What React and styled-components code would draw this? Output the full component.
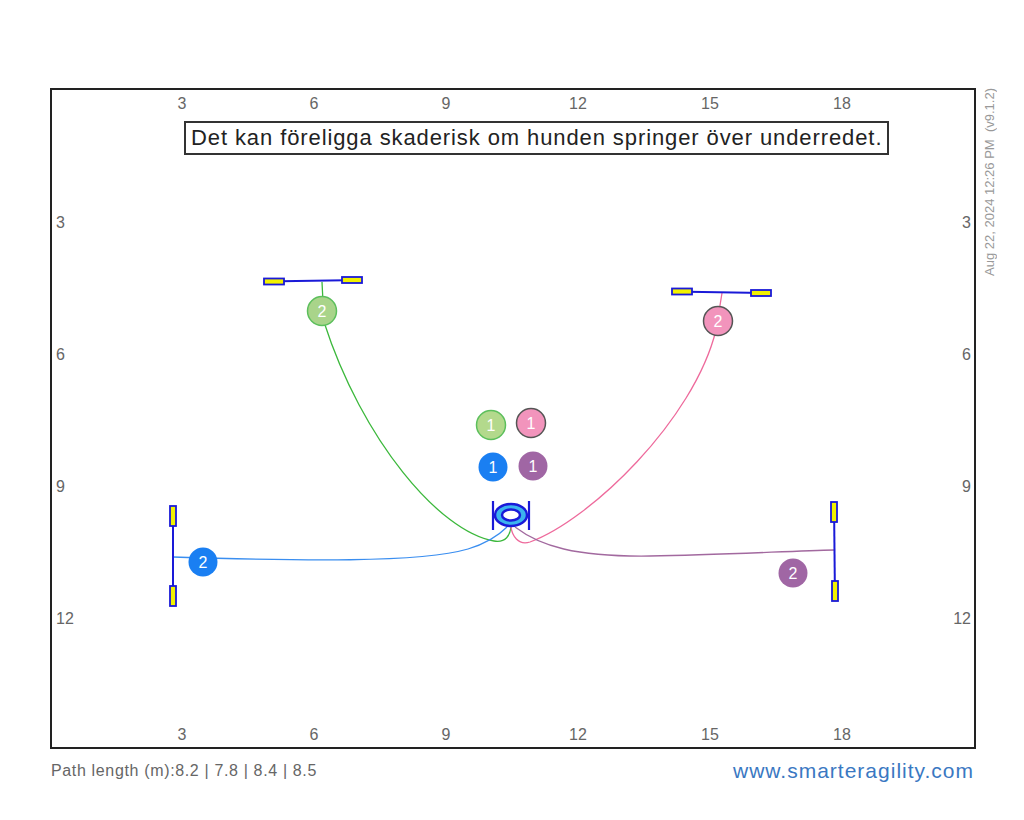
import React from "react";
import styled, { createGlobalStyle } from "styled-components";

const GlobalStyle = createGlobalStyle`
  body {
    margin: 0;
    background: #fff;
    font-family: "Liberation Sans", Arial, sans-serif;
  }
`;

const PX = 44; // pixels per metre
const X0 = 50;
const Y0 = 90;
const mx = (m) => X0 + m * PX;
const my = (m) => Y0 + m * PX;

const xTicks = [3, 6, 9, 12, 15, 18];
const yTicks = [3, 6, 9, 12];

const paths = [
  { color: "#3cb83c", d: "M322,282 L324,322 C 362,440 440,532 494,541 C 506,543 510,535 511,527" },
  { color: "#ee6a9c", d: "M722,293 L716,330 C 694,420 590,520 530,542 C 518,546 512,535 511,527" },
  { color: "#3a8ef0", d: "M173,557 C 300,561 420,563 468,549 C 488,543 500,534 507,527" },
  { color: "#a2699f", d: "M515,527 C 540,546 575,557 650,556 C 720,555 790,551 834,550" },
];

const markers = [
  { n: 2, x: 322, y: 311, fill: "#a9d48a", stroke: "#5cbf5c" },
  { n: 2, x: 718, y: 321, fill: "#f294bc", stroke: "#555" },
  { n: 2, x: 203, y: 562, fill: "#1a7ff2" },
  { n: 2, x: 793, y: 573, fill: "#a066a4" },
  { n: 1, x: 491, y: 425, fill: "#b3d98c", stroke: "#5cbf5c" },
  { n: 1, x: 531, y: 423, fill: "#f294bc", stroke: "#555" },
  { n: 1, x: 493, y: 467, fill: "#1a7ff2" },
  { n: 1, x: 533, y: 466, fill: "#a066a4" },
];

const Page = styled.div`
  padding: 88px 0 0 50px;
  width: 926px;
`;

const Field = styled.div`
  position: relative;
  width: 926px;
  height: 661px;
  box-sizing: border-box;
  border: 2px solid #222;
`;

const Canvas = styled.svg`
  position: absolute;
  inset: 0;
  width: 100%;
  height: 100%;
  overflow: visible;
`;

const Notice = styled.div`
  position: absolute;
  left: 132px;
  top: 31px;
  height: 34px;
  box-sizing: border-box;
  padding: 0 5px;
  border: 2px solid #333;
  background: #fff;
  color: #222;
  font-size: 22px;
  letter-spacing: 0.9px;
  line-height: 30px;
  white-space: nowrap;
`;

const Stamp = styled.div`
  position: absolute;
  top: -2px;
  left: 931px;
  writing-mode: vertical-rl;
  transform: rotate(180deg);
  color: #999;
  font-size: 13px;
  line-height: 14px;
  white-space: pre;
`;

const Footer = styled.div`
  display: flex;
  justify-content: space-between;
  align-items: center;
  padding: 10px 2px 0 1px;
`;

const PathLength = styled.span`
  color: #666;
  font-size: 16px;
  letter-spacing: 0.65px;
`;

const Site = styled.span`
  color: #3a78c2;
  font-size: 21px;
  letter-spacing: 1px;
`;

function Jump({ x1, y1, x2, y2, vertical }) {
  const w = vertical ? 6 : 20;
  const h = vertical ? 20 : 6;
  return (
    <g>
      <line x1={x1} y1={y1} x2={x2} y2={y2} stroke="#1a1ad8" strokeWidth="2" />
      {vertical ? (
        <>
          <rect x={x1 - 3} y={y1} width={w} height={h} fill="#f2f200" stroke="#1a1ad8" strokeWidth="1.8" />
          <rect x={x2 - 3} y={y2 - h} width={w} height={h} fill="#f2f200" stroke="#1a1ad8" strokeWidth="1.8" />
        </>
      ) : (
        <>
          <rect x={x1} y={y1 - 3} width={w} height={h} fill="#f2f200" stroke="#1a1ad8" strokeWidth="1.8" />
          <rect x={x2 - w} y={y2 - 3} width={w} height={h} fill="#f2f200" stroke="#1a1ad8" strokeWidth="1.8" />
        </>
      )}
    </g>
  );
}

function Tire({ x, y }) {
  return (
    <g>
      <line x1={x - 18} y1={y - 14} x2={x - 18} y2={y + 15} stroke="#1a1ad8" strokeWidth="2.2" />
      <line x1={x + 18} y1={y - 14} x2={x + 18} y2={y + 15} stroke="#1a1ad8" strokeWidth="2.2" />
      <ellipse cx={x} cy={y} rx="16" ry="11" fill="#3cb4ee" stroke="#1a1ad8" strokeWidth="2.5" />
      <ellipse cx={x} cy={y} rx="9" ry="5.5" fill="#fff" stroke="#1a1ad8" strokeWidth="2.5" />
    </g>
  );
}

function Marker({ n, x, y, fill, stroke }) {
  return (
    <g>
      <circle cx={x} cy={y} r="14.5" fill={fill} stroke={stroke || "none"} strokeWidth="1.5" />
      <text
        x={x}
        y={y + 5.5}
        textAnchor="middle"
        fill="#fff"
        fontSize="16"
        fontFamily="Liberation Sans, Arial, sans-serif"
      >
        {n}
      </text>
    </g>
  );
}

export default function App() {
  return (
    <>
      <GlobalStyle />
      <Page>
        <Field>
          <Canvas viewBox="52 90 922 657">
            <g fill="#666" fontSize="16" fontFamily="Liberation Sans, Arial, sans-serif">
              {xTicks.map((t) => (
                <React.Fragment key={t}>
                  <text x={mx(t)} y={109} textAnchor="middle">{t}</text>
                  <text x={mx(t)} y={740} textAnchor="middle">{t}</text>
                </React.Fragment>
              ))}
              {yTicks.map((t) => (
                <React.Fragment key={t}>
                  <text x={56} y={my(t) + 6}>{t}</text>
                  <text x={971} y={my(t) + 6} textAnchor="end">{t}</text>
                </React.Fragment>
              ))}
            </g>
            {paths.map((p) => (
              <path key={p.color} d={p.d} fill="none" stroke={p.color} strokeWidth="1.3" />
            ))}
            <Jump x1={264} y1={281.5} x2={362} y2={280} />
            <Jump x1={672} y1={291.5} x2={771} y2={293} />
            <Jump x1={173} y1={506} x2={173} y2={606} vertical />
            <Jump x1={834} y1={502} x2={835} y2={601} vertical />
            <Tire x={511} y={515} />
            {markers.map((m, i) => (
              <Marker key={i} {...m} />
            ))}
          </Canvas>
          <Notice>Det kan föreligga skaderisk om hunden springer över underredet.</Notice>
          <Stamp>{"Aug 22, 2024 12:26 PM  (v9.1.2)"}</Stamp>
        </Field>
        <Footer>
          <PathLength>Path length (m):8.2 | 7.8 | 8.4 | 8.5</PathLength>
          <Site>www.smarteragility.com</Site>
        </Footer>
      </Page>
    </>
  );
}
